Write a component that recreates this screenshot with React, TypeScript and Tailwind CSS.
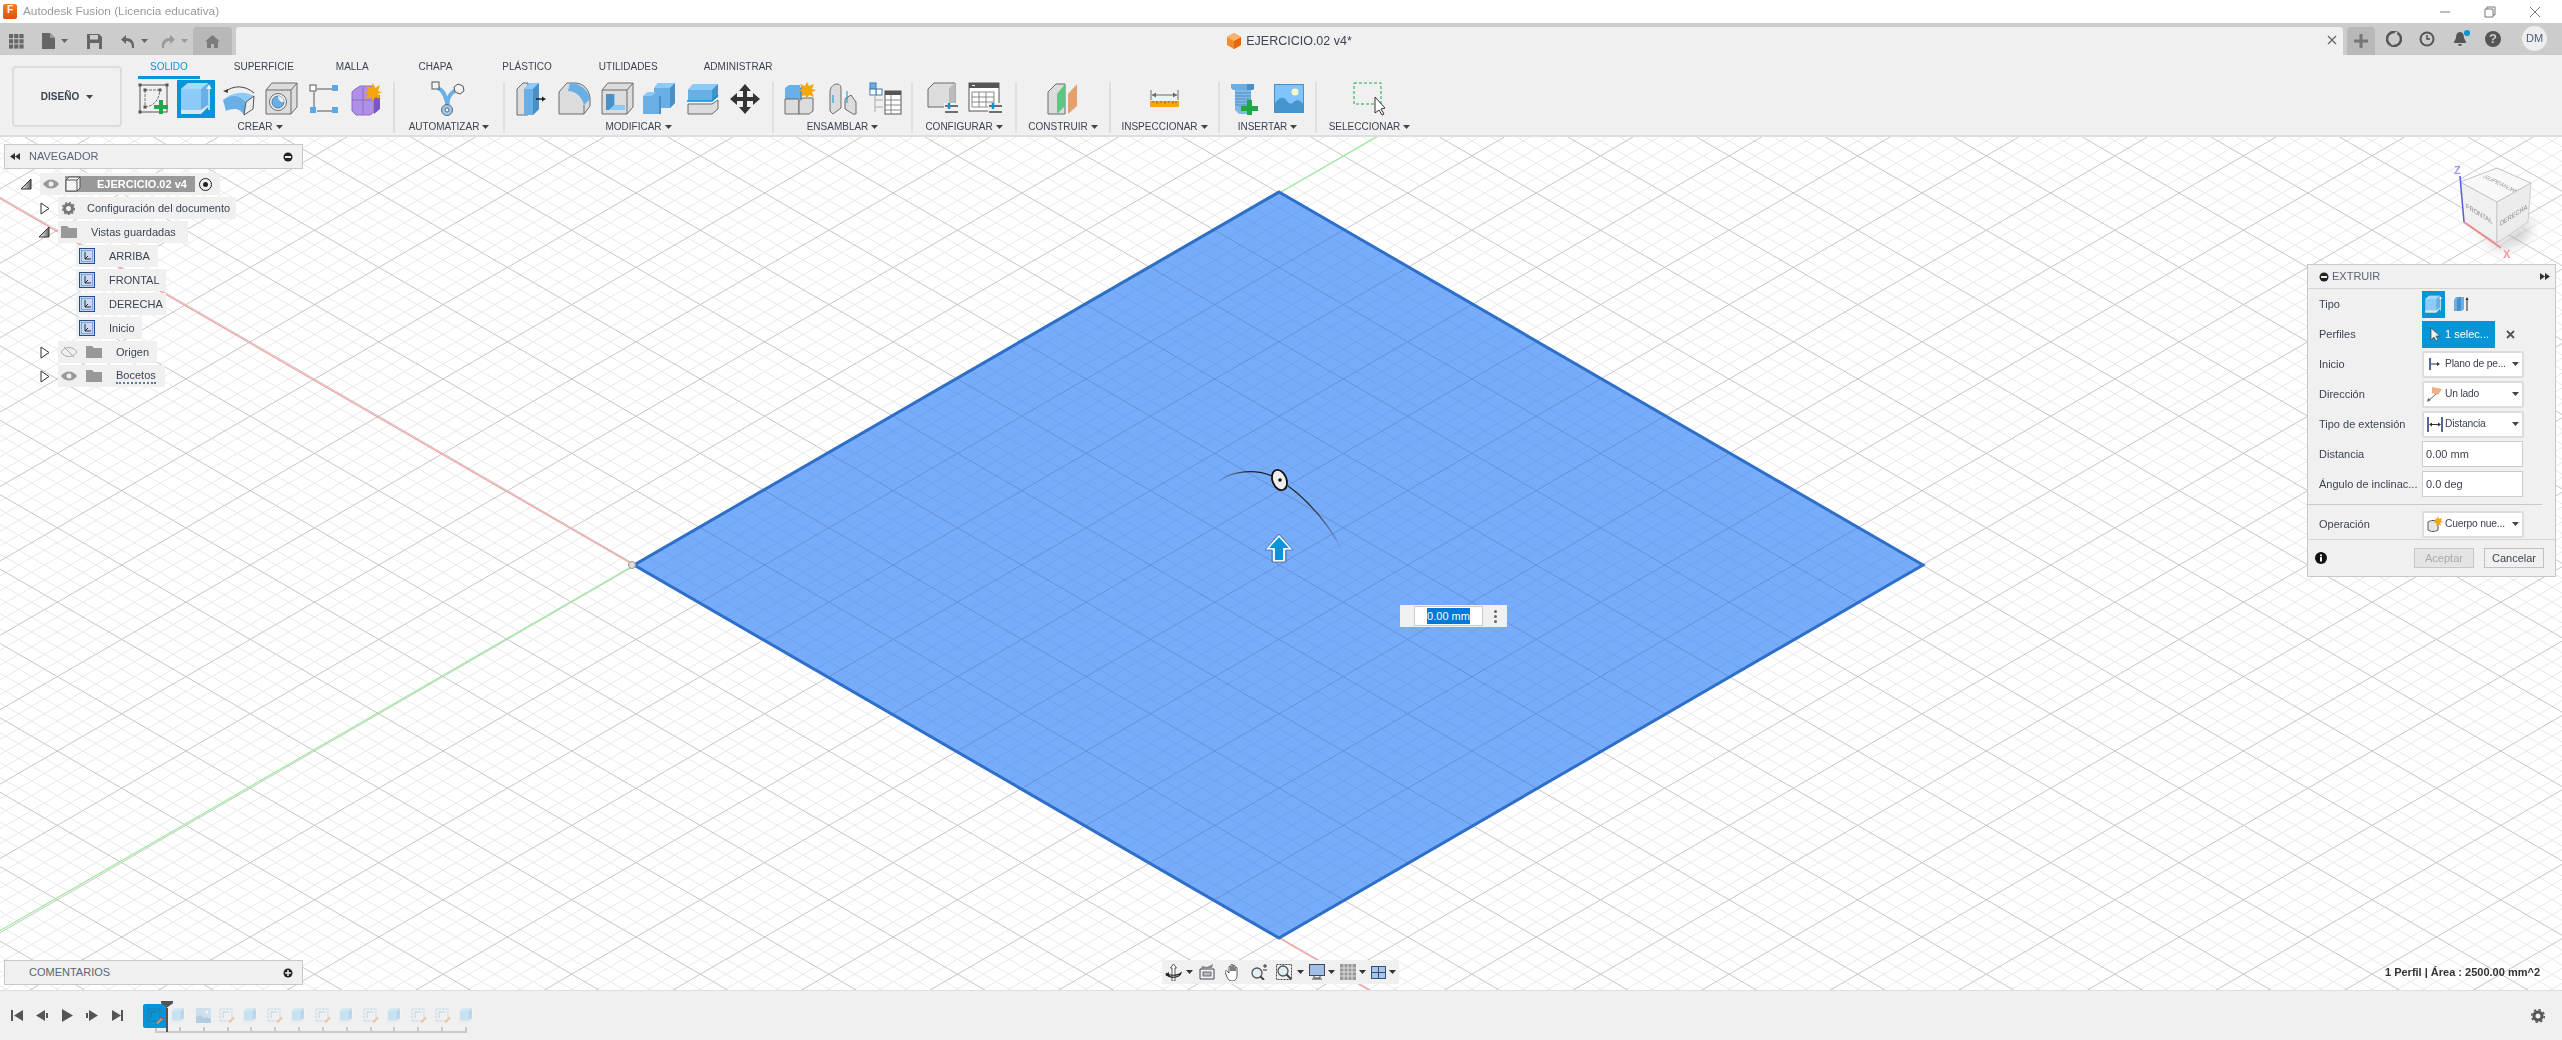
import type { ReactNode } from "react";

const BLUE = "#0696d7";
const LIGHT = "#8ccbf7";
const MID = "#6aaee6";
const DARK = "#4a90c8";
const LINE = "#6b6b6b";
const PALE = "#dcdcdc";

function Svg({ w, h, children, className }: { w: number; h: number; children: ReactNode; className?: string }) {
  return (
    <svg width={w} height={h} viewBox={`0 0 ${w} ${h}`} className={`block shrink-0 ${className ?? ""}`}>
      {children}
    </svg>
  );
}

function Caret({ color = "#444" }: { color?: string }) {
  return (
    <Svg w={7} h={4}>
      <path d="M0 0h7L3.5 4z" fill={color} />
    </Svg>
  );
}

/* ---------- ribbon icons ---------- */

function SketchIcon() {
  return (
    <Svg w={34} h={34}>
      <rect x="3" y="3" width="27" height="27" fill="none" stroke="#555" strokeWidth="1" />
      <path d="M8 8h14M8 8v17M8 25c9-1 14-7 15-17" fill="none" stroke="#777" strokeDasharray="3 1" />
      {[[3, 3], [30, 3], [3, 30], [8, 8], [23, 8], [8, 25]].map(([x, y]) => (
        <rect key={`${x}-${y}`} x={x - 1.5} y={y - 1.5} width="3" height="3" fill="#555" />
      ))}
      <path d="M22 18h4v5h5v4h-5v5h-4v-5h-5v-4h5z" fill="#1fa84a" />
    </Svg>
  );
}

function ExtrudeIcon({ scale = 1 }: { scale?: number }) {
  return (
    <svg width={38 * scale} height={38 * scale} viewBox="0 0 38 38" className="block shrink-0">
      <path d="M4 9l7-6h20v22l-7 7H4z" fill={LIGHT} />
      <path d="M4 9l7-6h20l-7 6z" fill="#a9d8fb" />
      <path d="M24 9l7-6v22l-7 5z" fill={MID} />
      <path d="M4 30h20l7-5v2l-7 7H4z" fill="#dfe6ea" />
      <path d="M32 30V7" stroke="#fff" strokeWidth="1.3" />
      <path d="M29.5 9L32 4l2.5 5z" fill="#fff" />
    </svg>
  );
}

function RevolveIcon() {
  return (
    <Svg w={34} h={34}>
      <path d="M3 10C11 3 23 3 32 11" fill="none" stroke="#444" />
      <path d="M1 9l5-2v4z" fill="#444" />
      <path d="M1 18c9-7 18-5 23 2l-2 13C18 26 11 26 4 29z" fill={MID} />
      <path d="M1 18c9-7 18-5 23 2l8-6C24 9 11 9 1 18z" fill={LIGHT} />
      <path d="M24 20l8-6-1 13-9 6z" fill="#eee" stroke="#555" />
    </Svg>
  );
}

function HoleIcon() {
  return (
    <Svg w={33} h={33}>
      <path d="M1 8l6-7h25v24l-6 7H1z" fill={PALE} stroke={LINE} />
      <path d="M1 8h25v24M26 8l6-7" fill="none" stroke={LINE} />
      <circle cx="13" cy="20" r="8.5" fill="#f2f2f2" stroke={LINE} />
      <circle cx="13" cy="20" r="6" fill={MID} stroke="#4a7aa8" />
      <path d="M13 14a6 6 0 016 6c-3 1-6-2-6-6z" fill="#eee" />
    </Svg>
  );
}

function BoxIcon() {
  return (
    <Svg w={30} h={30}>
      <path d="M8 5h16M5 8v18M8 27h16" stroke="#555" />
      <rect x="1" y="1" width="6" height="6" fill="#fff" stroke="#555" />
      <rect x="23" y="1" width="6" height="6" fill="#5aa9e6" />
      <rect x="1" y="23" width="6" height="6" fill="#5aa9e6" />
      <rect x="23" y="23" width="6" height="6" fill="#5aa9e6" />
    </Svg>
  );
}

function FormIcon() {
  return (
    <Svg w={32} h={34}>
      <path d="M4 8l6-4h14v26l-4 3H6l-4-4V10z" fill="#b08fe6" stroke="#8a6ccb" />
      <path d="M2 18h22M13 5v28" stroke="#8a6ccb" />
      <path d="M24 16l6-3v14l-6 5z" fill="#7a58c0" />
      <path d="M23 1l2 5 5-3-2 6 4 1-4 2 3 5-6-2-2 5-2-5-6 2 3-5-4-2 5-1-3-6 5 3z" fill="#f5a60a" />
    </Svg>
  );
}

function AutomateIcon() {
  return (
    <Svg w={36} h={36}>
      <path d="M7 7c6 3 7 8 9 14 2-6 4-10 11-13" fill="none" stroke={MID} strokeWidth="4" />
      <path d="M14 18h5l-1 9h-3z" fill={MID} />
      <rect x="1" y="1" width="7" height="7" fill="#f3f3f3" stroke="#555" />
      <path d="M27 3l5 2 1 5-4 3-5-2-1-5z" fill="#f3f3f3" stroke="#555" />
      <circle cx="16" cy="29" r="5.5" fill="#a9c5dc" stroke="#4b6f8e" />
      <circle cx="16" cy="29" r="2" fill="#f3f3f3" stroke="#4b6f8e" />
    </Svg>
  );
}

function PressPullIcon() {
  return (
    <Svg w={32} h={34}>
      <path d="M1 7l6-6h5v32H1z" fill={PALE} stroke={LINE} />
      <path d="M8 7l6-6h9v26l-6 6H8z" fill={MID} />
      <path d="M8 7l6-6h9l-6 6z" fill={LIGHT} />
      <path d="M17 7l6-6v26l-6 6z" fill={DARK} />
      <path d="M20 17h7" stroke="#222" strokeWidth="1.5" />
      <path d="M26 14.5l4 2.5-4 2.5z" fill="#222" />
    </Svg>
  );
}

function FilletIcon() {
  return (
    <Svg w={33} h={33}>
      <path d="M1 10l8-9h8c8 0 14 6 15 15v8l-6 8H1z" fill={PALE} stroke={LINE} />
      <path d="M12 1c9 0 18 6 20 16l-6 6C24 15 18 9 10 9z" fill={MID} />
      <path d="M26 23v9" stroke={LINE} />
    </Svg>
  );
}

function ShellIcon() {
  return (
    <Svg w={33} h={33}>
      <path d="M1 8l6-7h25v24l-6 7H1z" fill={PALE} stroke={LINE} />
      <path d="M1 8h25v24M26 8l6-7" fill="none" stroke={LINE} />
      <path d="M5 12h8v12h9l-2 4H5z" fill={DARK} />
      <path d="M13 12h1v11h10l-2 5h-2l2-4h-9z" fill={LIGHT} />
      <path d="M8 28l5-5h11v5z" fill={LIGHT} />
    </Svg>
  );
}

function CombineIcon() {
  return (
    <Svg w={33} h={33}>
      <path d="M11 6l4-5h17v20l-5 5H18v6H0V14l5-4h6z" fill={MID} />
      <path d="M11 6l4-5h17l-5 5zM0 14l5-4h8l-4 4z" fill={LIGHT} />
      <path d="M27 6l5-5v20l-5 5zM18 14v18l-2 0V14z" fill={DARK} />
    </Svg>
  );
}

function SplitIcon() {
  return (
    <Svg w={33} h={32}>
      <path d="M2 7l5-6h25v13l-6 4H2z" fill={MID} />
      <path d="M2 7l5-6h25l-6 6z" fill={LIGHT} />
      <path d="M26 7l6-6v13l-6 4z" fill={DARK} />
      <path d="M1 18h25l6-6" fill="none" stroke={BLUE} strokeWidth="1.5" />
      <path d="M2 21h24l6-4v9l-6 5H2z" fill={PALE} stroke={LINE} />
    </Svg>
  );
}

function MoveIcon() {
  return (
    <Svg w={32} h={32}>
      <path d="M16 1l6 7h-4v6h6v-4l7 6-7 6v-4h-6v6h4l-6 7-6-7h4v-6H8v4l-7-6 7-6v4h6V8h-4z" fill="#333" />
    </Svg>
  );
}

function NewComponentIcon() {
  return (
    <Svg w={33} h={33}>
      <path d="M1 6l4-3h11v14H1z" fill={MID} />
      <path d="M16 6l2-2v13h-2z" fill={DARK} />
      <path d="M1 17h14v15H1z" fill={PALE} stroke={LINE} />
      <path d="M15 19l4-3h10v13l-4 3H15z" fill={PALE} stroke={LINE} />
      <path d="M23 0l2 4 5-2-2 5 4 1-4 2 2 5-5-2-2 4-2-4-4 2 1-5-4-2 4-1-2-5 5 2z" fill="#f5a60a" />
    </Svg>
  );
}

function JointIcon() {
  return (
    <Svg w={30} h={32}>
      <path d="M2 9c0-4 3-8 7-8s4 4 4 6v18l-8 6-3-3z" fill={PALE} stroke={LINE} />
      <path d="M17 16l6-4 5 7v12l-3 0-8-5z" fill={PALE} stroke={LINE} />
      <path d="M5 20v-8M19 8v12" stroke={BLUE} />
    </Svg>
  );
}

function TableIcon() {
  return (
    <Svg w={33} h={33}>
      <rect x="1" y="1" width="6" height="6" fill={MID} stroke="#3b7bb0" />
      <rect x="7" y="7" width="6" height="6" fill="#fff" stroke="#3b7bb0" />
      <rect x="1" y="7" width="6" height="6" fill="#fff" stroke="#3b7bb0" />
      <path d="M6 13v17M6 18h8M6 25h8" stroke="#aaa" />
      <rect x="16" y="9" width="16" height="23" fill="#fff" stroke="#555" />
      <rect x="16" y="9" width="16" height="4" fill="#555" />
      <path d="M16 18h16M16 23h16M16 28h16M22 13v19" stroke="#888" />
    </Svg>
  );
}

function ParamIcon() {
  return (
    <Svg w={32} h={33}>
      <path d="M1 7l6-6h21v24H1z" fill={PALE} stroke={LINE} />
      <path d="M22 6l6-5v24h-6z" fill="#bbb" />
      <rect x="17" y="21" width="15" height="12" fill="#f0f0f0" />
      <path d="M18 24h13M18 30h13" stroke="#444" strokeWidth="1.5" />
      <path d="M22 21v6" stroke={BLUE} strokeWidth="2.5" />
    </Svg>
  );
}

function ParamTableIcon() {
  return (
    <Svg w={34} h={33}>
      <rect x="1" y="1" width="30" height="28" fill="#fff" stroke="#555" />
      <rect x="1" y="1" width="30" height="5" fill="#555" />
      <path d="M4 3.5h3" stroke="#fff" />
      <path d="M4 10h22v15H4zM4 15h22M4 20h22M11 10v15M18 10v15" fill="none" stroke="#888" />
      <rect x="20" y="21" width="14" height="12" fill="#f0f0f0" />
      <path d="M21 24h13M21 30h13" stroke="#444" strokeWidth="1.5" />
      <path d="M25 21v6" stroke={BLUE} strokeWidth="2.5" />
    </Svg>
  );
}

function PlaneIcon() {
  return (
    <Svg w={32} h={32}>
      <path d="M1 9l8-8h9v30H1z" fill={PALE} stroke={LINE} />
      <path d="M10 11l8-10v22l-8 8z" fill="#5cc782" />
      <path d="M21 11l9-10v22l-9 8z" fill="#e6a06e" />
    </Svg>
  );
}

function MeasureIcon() {
  return (
    <Svg w={30} h={18}>
      <path d="M1 0v10M28 0v10M2 5h25" fill="none" stroke={LINE} />
      <path d="M2 5l4-2.5v5zM27 5l-4-2.5v5z" fill={LINE} />
      <rect x="0" y="11" width="29" height="6" fill="#f5a60a" />
      <path d="M3 11v2M7 11v3M11 11v2M15 11v3M19 11v2M23 11v3M26 11v2" stroke="#9c6a00" />
    </Svg>
  );
}

function BoltIcon() {
  return (
    <Svg w={32} h={32}>
      <path d="M1 1h23l0 5-2 1H3L1 5z" fill={MID} />
      <path d="M17 1h7v5l-2 1h-5z" fill={DARK} />
      <path d="M5 7h16v17l-4 7H9l-4-4z" fill="#83b8e4" />
      <path d="M5 10h16M5 13h16M5 16h16M5 19h16M5 22h16" stroke={DARK} />
      <path d="M17 17h5v6h6v5h-6v4h-5v-4h-6v-5h6z" fill="#1fa84a" />
    </Svg>
  );
}

function CanvasIcon() {
  return (
    <Svg w={30} h={30}>
      <rect x="0.5" y="0.5" width="29" height="28" fill="#7fc4fa" stroke="#4a90c8" />
      <circle cx="21" cy="8" r="3.5" fill="#fdf7c8" />
      <path d="M1 28V19c5-6 8-7 12-2 3 4 5 3 8 0 3-2 6 0 8 3v8z" fill="#4596cf" />
    </Svg>
  );
}

function SelectIcon() {
  return (
    <Svg w={34} h={34}>
      <rect x="1" y="1" width="27" height="21" fill="none" stroke="#1fa84a" strokeDasharray="3 2" />
      <path d="M22 15v16l4-3 3 5 2-1-3-5 4-1z" fill="#fff" stroke="#333" />
    </Svg>
  );
}

/* ---------- top bar icons ---------- */

function AppGrid() {
  return (
    <Svg w={15} h={15}>
      {[0, 5.2, 10.4].flatMap((x) =>
        [0, 5.2, 10.4].map((y) => <rect key={`${x}-${y}`} x={x} y={y} width="4.2" height="4.2" fill="#666" />),
      )}
    </Svg>
  );
}

function TopIcons() {
  return (
    <div className="flex w-[193px] items-center pl-[9px]">
      <AppGrid />
      <div className="ml-[18px]">
        <Svg w={13} h={16}>
          <path d="M0 0h8l5 5v11H0z" fill="#666" />
          <path d="M8 0v5h5z" fill="#999" />
        </Svg>
      </div>
      <div className="ml-[6px]"><Caret color="#666" /></div>
      <div className="ml-[19px]">
        <Svg w={15} h={15}>
          <path d="M0 0h12l3 3v12H0z" fill="#666" />
          <rect x="3" y="1" width="8" height="4.5" fill="#ccc" />
          <rect x="3" y="9" width="9" height="6" fill="#ccc" />
        </Svg>
      </div>
      <div className="ml-[19px]">
        <Svg w={14} h={13}>
          <path d="M5 0L0 4.500 5 9V6c4 0 6 2 6 7h2c1-7-3-10-8-10z" fill="#666" />
        </Svg>
      </div>
      <div className="ml-[6px]"><Caret color="#666" /></div>
      <div className="ml-[13px]">
        <Svg w={14} h={13}>
          <path d="M9 0l5 4.500L9 9V6C5 6 3 8 3 13H1C0 6 4 3 9 3z" fill="#999" />
        </Svg>
      </div>
      <div className="ml-[6px]"><Caret color="#999" /></div>
    </div>
  );
}

function WindowControls() {
  return (
    <div className="flex items-center gap-[33px] pr-[21px]">
      <Svg w={12} h={12}><path d="M1 6h10" stroke="#777" /></Svg>
      <Svg w={12} h={12}>
        <path d="M3 3V1h8v8H9M1 3h8v8H1z" fill="none" stroke="#777" />
      </Svg>
      <Svg w={12} h={12}><path d="M1 1l10 10M11 1L1 11" stroke="#777" /></Svg>
    </div>
  );
}

function TitleBar() {
  return (
    <div className="flex h-[23px] items-center justify-between bg-white">
      <div className="flex items-center">
        <div className="ml-[3px] flex h-[15px] w-[14px] flex-col items-center rounded-[2px] bg-gradient-to-b from-[#f58220] to-[#d94f12] text-[10px] leading-[11px] font-bold text-white">
          F
        </div>
        <span className="ml-[6px] text-[11.800px] text-[#999]">Autodesk Fusion (Licencia educativa)</span>
      </div>
      <WindowControls />
    </div>
  );
}

function TabStrip() {
  return (
    <div className="flex h-[32px] items-end bg-[#cccccc]">
      <div className="flex h-[28px] items-center self-end">
        <TopIcons />
      </div>
      <div className="flex h-[28px] w-[39px] items-center justify-center rounded-t-[4px] bg-[#b8b8b8]">
        <Svg w={15} h={13}>
          <path d="M7.500 0L15 6.500h-2V13H9V9H6v4H2V6.500H0z" fill="#7c7c7c" />
        </Svg>
      </div>
      <div className="relative ml-[4px] flex h-[28px] w-[2107px] items-center justify-center rounded-t-[4px] bg-[#f0f0f0]">
        <div className="flex items-center gap-[5px]">
          <Svg w={14} h={16}>
            <path d="M7 0l7 4v8l-7 4-7-4V4z" fill="#f58a2c" />
            <path d="M7 8l7-4v8l-7 4z" fill="#e8650f" />
            <path d="M7 0l7 4-7 4-7-4z" fill="#fbb26a" />
          </Svg>
          <span className="text-[12.500px] text-[#3c4453]">EJERCICIO.02 v4*</span>
        </div>
        <div className="absolute top-[8px] right-[6px]">
          <Svg w={10} h={10}><path d="M1 1l8 8M9 1L1 9" stroke="#666" strokeWidth="1.3" /></Svg>
        </div>
      </div>
      <div className="ml-[4px] flex h-[28px] w-[28px] items-center justify-center rounded-t-[4px] bg-[#b8b8b8]">
        <Svg w={14} h={14}><path d="M5.500 0h3v5.500H14v3H8.500V14h-3V8.500H0v-3h5.500z" fill="#777" /></Svg>
      </div>
      <div className="ml-[11px] flex h-[32px] items-center gap-[17px]">
        <Svg w={16} h={16}>
          <circle cx="8" cy="8" r="7" fill="none" stroke="#555" strokeWidth="2.500" />
          <path d="M11 1L5 8h4l-3 6" stroke="#ccc" strokeWidth="2" fill="none" />
        </Svg>
        <Svg w={16} h={16}>
          <circle cx="8" cy="8" r="7.500" fill="#555" />
          <circle cx="8" cy="8" r="5.500" fill="#ccc" />
          <path d="M8 4v4h3" fill="none" stroke="#444" strokeWidth="1.300" />
        </Svg>
        <div className="relative">
          <Svg w={16} h={16}>
            <path d="M8 1c3 0 4 3 4 6l2 4v1H2v-1l2-4c0-3 1-6 4-6zM6 13h4a2 2 0 01-4 0z" fill="#555" />
          </Svg>
          <div className="absolute top-[-1px] right-[-2px] h-[6px] w-[6px] rounded-full bg-[#0696d7]" />
        </div>
        <div className="flex h-[16px] w-[16px] items-center justify-center rounded-full bg-[#555] text-[13px] font-bold text-[#ccc]">?</div>
      </div>
      <div className="mb-[1px] ml-[21px] flex h-[25px] w-[25px] items-center justify-center self-center rounded-full bg-[#eeeeee] text-[11px] text-[#4a5a78]">
        DM
      </div>
    </div>
  );
}

/* ---------- ribbon ---------- */

const TABS = [
  { label: "SOLIDO", gap: "ml-0" },
  { label: "SUPERFICIE", gap: "ml-[22px]" },
  { label: "MALLA", gap: "ml-[18px]" },
  { label: "CHAPA", gap: "ml-[26px]" },
  { label: "PLÁSTICO", gap: "ml-[26px]" },
  { label: "UTILIDADES", gap: "ml-[23px]" },
  { label: "ADMINISTRAR", gap: "ml-[22px]" },
];

interface Group {
  label: string;
  width: number;
  pad?: number;
  icons: ReactNode[];
}

const GROUPS: Group[] = [
  {
    label: "CREAR",
    width: 262,
    pad: 6,
    icons: [
      <SketchIcon key="a" />,
      <div key="b" className="bg-[#0696d7]"><ExtrudeIcon /></div>,
      <RevolveIcon key="c" />,
      <HoleIcon key="d" />,
      <BoxIcon key="e" />,
      <FormIcon key="f" />,
    ],
  },
  { label: "AUTOMATIZAR", width: 110, icons: [<AutomateIcon key="a" />] },
  {
    label: "MODIFICAR",
    width: 269,
    icons: [
      <PressPullIcon key="a" />,
      <FilletIcon key="b" />,
      <ShellIcon key="c" />,
      <CombineIcon key="d" />,
      <SplitIcon key="e" />,
      <MoveIcon key="f" />,
    ],
  },
  { label: "ENSAMBLAR", width: 139, icons: [<NewComponentIcon key="a" />, <JointIcon key="b" />, <TableIcon key="c" />] },
  { label: "CONFIGURAR", width: 104, icons: [<ParamIcon key="a" />, <ParamTableIcon key="b" />] },
  { label: "CONSTRUIR", width: 94, icons: [<PlaneIcon key="a" />] },
  { label: "INSPECCIONAR", width: 109, icons: [<MeasureIcon key="a" />] },
  { label: "INSERTAR", width: 97, icons: [<BoltIcon key="a" />, <CanvasIcon key="b" />] },
  { label: "SELECCIONAR", width: 107, icons: [<SelectIcon key="a" />] },
];

function Ribbon() {
  return (
    <div className="flex h-[82px] border-b-2 border-[#dedede] bg-[#f0f0f0]">
      <div className="w-[132px] pt-[11px] pl-[12px]">
        <div className="flex h-[61px] w-[110px] items-center justify-center gap-[7px] rounded-[4px] border-2 border-[#dcdcdc] text-[10px] font-bold text-[#3c4453]">
          DISEÑO
          <Caret />
        </div>
      </div>
      <div className="flex flex-col">
        <div className="flex h-[24px] pl-[6px]">
          {TABS.map((tab, i) => (
            <div
              key={tab.label}
              className={`flex h-[24px] items-center border-b-[3px] px-[12px] pt-[2px] text-[10px] ${tab.gap} ${
                i === 0 ? "border-[#0696d7] text-[#0696d7]" : "border-transparent text-[#3c4453]"
              }`}
            >
              {tab.label}
            </div>
          ))}
        </div>
        <div className="flex">
          {GROUPS.map((group, i) => (
            <div
              key={group.label}
              style={{ width: group.width, paddingRight: group.pad ?? 0 }}
              className="relative flex h-[56px] flex-col items-center"
            >
              <div className="flex h-[39px] items-center justify-center">
                {group.icons.map((icon, k) => (
                  <div key={k} className="flex w-[42.500px] justify-center">{icon}</div>
                ))}
              </div>
              <div className="mt-[1px] flex h-[15px] items-center gap-[3px] text-[10px] text-[#3c4453]">
                {group.label}
                <Caret />
              </div>
              {i < GROUPS.length - 1 && <div className="absolute top-[3px] right-[-1px] h-[51px] w-[2px] bg-[#e0e0e0]" />}
            </div>
          ))}
        </div>
      </div>
    </div>
  );
}

/* ---------- viewport drawing ---------- */

const TOP = { x: 1279, y: 193 };
const CELL_W = 128.6;
const CELL_H = 74.4;
const SLOPE = CELL_H / CELL_W;
const MINOR = CELL_W / 5;

function gridLines(major: boolean) {
  const out: ReactNode[] = [];
  const y0 = 137;
  const y1 = 990;
  for (let k = -110; k <= 110; k++) {
    if ((k % 5 === 0) !== major) continue;
    const c = TOP.x + k * MINOR;
    const d0 = (y0 - TOP.y) / SLOPE;
    const d1 = (y1 - TOP.y) / SLOPE;
    out.push(<line key={`a${k}`} x1={c + d0} y1={y0} x2={c + d1} y2={y1} />);
    out.push(<line key={`b${k}`} x1={c - d0} y1={y0} x2={c - d1} y2={y1} />);
  }
  return out;
}

function CubeGizmo() {
  return (
    <g>
      <defs>
        <filter id="cube-shadow" x="-50%" y="-50%" width="200%" height="200%">
          <feGaussianBlur stdDeviation="6" />
        </filter>
      </defs>
      <path d="M2464 222l33 21 31-21 8-12-10 30-28 10z" fill="#999" opacity="0.5" filter="url(#cube-shadow)" />
      <path d="M2460 182l37-14 34 15-3 39-31 21-33-21z" fill="#f4f4f4" opacity="0.9" />
      <path d="M2460 182l37-14 34 15-34 19z" fill="#f8f8f8" stroke="#aaa" strokeWidth="0.7" />
      <path d="M2460 182l4 40 33 21v-41z" fill="#f0f0f0" stroke="#bbb" strokeWidth="0.7" />
      <path d="M2497 202l34-19-3 39-31 21z" fill="#ececec" stroke="#bbb" strokeWidth="0.7" />
      <text transform="matrix(0.87 0.42 -0.9 0.42 2482 177)" fontSize="7" fill="#999" fontFamily="Liberation Sans, sans-serif">SUPERIOR</text>
      <text transform="matrix(0.82 0.5 0 1 2466 208)" fontSize="7" fill="#888" fontFamily="Liberation Sans, sans-serif">FRONTAL</text>
      <text transform="matrix(0.8 -0.5 0 1 2500 226)" fontSize="7" fill="#888" fontFamily="Liberation Sans, sans-serif">DERECHA</text>
      <line x1="2464" y1="222" x2="2460" y2="176" stroke="#5a5af0" strokeWidth="1.500" />
      <line x1="2464" y1="222" x2="2501" y2="248" stroke="#ee8a8a" strokeWidth="2" />
      <text x="2454" y="174" fontSize="11" fontWeight="bold" fill="#9a9af5" fontFamily="Liberation Sans, sans-serif">Z</text>
      <text x="2503" y="258" fontSize="11" fontWeight="bold" fill="#f59a9a" fontFamily="Liberation Sans, sans-serif">X</text>
    </g>
  );
}

function Canvas() {
  return (
    <svg className="absolute inset-0" width="2562" height="853" viewBox="0 137 2562 853">
      <defs>
        <linearGradient id="arc-in" gradientUnits="userSpaceOnUse" x1="1216" y1="0" x2="1272" y2="0">
          <stop offset="0" stopColor="#222" stopOpacity="0" />
          <stop offset="0.6" stopColor="#222" />
        </linearGradient>
        <linearGradient id="arc-out" gradientUnits="userSpaceOnUse" x1="1288" y1="0" x2="1342" y2="0">
          <stop offset="0.4" stopColor="#222" />
          <stop offset="1" stopColor="#222" stopOpacity="0" />
        </linearGradient>
      </defs>
      <rect x="0" y="137" width="2562" height="853" fill="#ffffff" />
      <g stroke="#e9e9e9" strokeWidth="1">{gridLines(false)}</g>
      <g stroke="#c6c6c6" strokeWidth="1">{gridLines(true)}</g>
      <line x1="-1" y1="198" x2="1400" y2="1008" stroke="#f6a3a3" strokeWidth="1.300" />
      <line x1="-2" y1="932" x2="1380" y2="135" stroke="#a0eea0" strokeWidth="1.300" />
      <polygon points="1279,192 1923,565 1279,938 634,565" fill="#78adfb" className="mix-blend-multiply" />
      <polygon points="1279,192 1923,565 1279,938 634,565" fill="#78adfb" opacity="0.3" />
      <polygon points="1279,192 1923,565 1279,938 634,565" fill="none" stroke="#2e6fc9" strokeWidth="3" />
      <circle cx="632" cy="565" r="3.500" fill="#ddd" stroke="#999" />
      <path d="M1218 482c14-12 38-13 54-6" fill="none" stroke="url(#arc-in)" strokeWidth="1.300" />
      <path d="M1288 486c20 14 46 44 54 66" fill="none" stroke="url(#arc-out)" strokeWidth="1.200" />
      <ellipse cx="1279.500" cy="480" rx="7" ry="10.500" transform="rotate(-22 1279.500 480)" fill="#eeeeee" stroke="#111" strokeWidth="1.800" />
      <circle cx="1280" cy="480" r="1.800" fill="#111" />
      <path d="M1279 536l12 13h-7v12h-10v-12h-7z" fill="#0696d7" stroke="#fff" strokeWidth="1.800" />
      <path d="M1279 534l14 16h-7v12h-14v-12h-7z" fill="none" stroke="#3a6aa8" strokeWidth="0.800" />
      <CubeGizmo />
    </svg>
  );
}

/* ---------- browser tree ---------- */

function Eye({ off }: { off?: boolean }) {
  return (
    <Svg w={16} h={10}>
      <path d="M0 5c4-6 12-6 16 0-4 6-12 6-16 0z" fill={off ? "none" : "#999"} stroke={off ? "#aaa" : "none"} />
      {!off && <circle cx="8" cy="5" r="2.500" fill="#eee" />}
      {off && <path d="M3 0l10 10" stroke="#aaa" />}
    </Svg>
  );
}

function Folder() {
  return (
    <Svg w={16} h={12}>
      <path d="M0 0h6l2 2h8v10H0z" fill="#999" />
    </Svg>
  );
}

function ViewIcon() {
  return (
    <Svg w={16} h={16}>
      <rect x="0.500" y="0.500" width="15" height="15" fill="#dbe8f5" stroke="#1f4e8c" strokeWidth="1.200" />
      <rect x="2.500" y="2.500" width="11" height="11" fill="#c8dcf0" stroke="#5d8abf" strokeWidth="0.700" />
      <path d="M6 4v7h6M6 11l3-3" fill="none" stroke="#223" />
    </Svg>
  );
}

function Open() {
  return (
    <Svg w={12} h={12}>
      <path d="M11 1v10H1z" fill="url(#open)" stroke="#333" />
      <defs>
        <linearGradient id="open" x1="0" x2="1">
          <stop offset="0" stopColor="#fff" />
          <stop offset="1" stopColor="#666" />
        </linearGradient>
      </defs>
    </Svg>
  );
}

function Closed() {
  return (
    <Svg w={10} h={13}>
      <path d="M1 1l8 5.500L1 12z" fill="#fff" stroke="#333" />
    </Svg>
  );
}

function Pill({ left, width, children }: { left: number; width: number; children: ReactNode }) {
  return (
    <div style={{ marginLeft: left, width }} className="flex h-[22px] items-center bg-[#f0f0f0] text-[11px] text-[#3c4453]">
      {children}
    </div>
  );
}

const VIEWS = [
  { name: "ARRIBA", width: 82 },
  { name: "FRONTAL", width: 90 },
  { name: "DERECHA", width: 90 },
  { name: "Inicio", width: 66 },
];

function Navigator() {
  return (
    <div className="absolute top-[7px] left-[4px] w-[299px]">
      <div className="flex h-[25px] items-center border border-[#c8c8c8] bg-[#f0f0f0] pr-[9px] pl-[5px] text-[11px] text-[#5a6478]">
        <Svg w={10} h={7}><path d="M5 0v7L0 3.500zM10 0v7L5 3.500z" fill="#333" /></Svg>
        <span className="ml-[9px] flex-1">NAVEGADOR</span>
        <Svg w={10} h={10}>
          <circle cx="5" cy="5" r="4.500" fill="#222" />
          <rect x="2" y="4" width="6" height="2" fill="#eee" />
        </Svg>
      </div>
      <div className="mt-[3px] flex h-[24px] items-center pl-[16px]">
        <Open />
        <div className="ml-[8px] flex h-[22px] w-[180px] items-center bg-[#f0f0f0]">
          <div className="ml-[3px]"><Eye /></div>
          <div className="ml-[6px] flex h-[16px] w-[130px] items-center bg-[#999]">
            <Svg w={16} h={16}>
              <path d="M1 4l3-3h11v11l-3 3H1z" fill="#f4f4f4" stroke="#555" />
              <path d="M1 4h11v11M12 4l3-3" fill="none" stroke="#555" />
            </Svg>
            <span className="ml-[16px] text-[11px] font-bold text-white">EJERCICIO.02 v4</span>
          </div>
          <div className="ml-[4px] flex h-[13px] w-[13px] items-center justify-center rounded-full border border-[#222]">
            <div className="h-[5px] w-[5px] rounded-full bg-[#222]" />
          </div>
        </div>
      </div>
      <div className="flex h-[24px] items-center pl-[36px]">
        <Closed />
        <Pill left={8} width={178}>
          <Svg w={13} h={13} className="ml-[4px]">
            <circle cx="6.500" cy="6.500" r="4" fill="none" stroke="#777" strokeWidth="3" />
            <circle cx="6.500" cy="6.500" r="6" fill="none" stroke="#777" strokeWidth="1.500" strokeDasharray="2 2" />
          </Svg>
          <span className="ml-[12px]">Configuración del documento</span>
        </Pill>
      </div>
      <div className="flex h-[24px] items-center pl-[34px]">
        <Open />
        <Pill left={8} width={130}>
          <div className="ml-[3px]"><Folder /></div>
          <span className="ml-[14px]">Vistas guardadas</span>
        </Pill>
      </div>
      {VIEWS.map((view) => (
        <div key={view.name} className="flex h-[24px] items-center pl-[72px]">
          <Pill left={0} width={view.width}>
            <div className="ml-[3px]"><ViewIcon /></div>
            <span className="ml-[14px]">{view.name}</span>
          </Pill>
        </div>
      ))}
      <div className="flex h-[24px] items-center pl-[36px]">
        <Closed />
        <Pill left={8} width={99}>
          <div className="ml-[3px]"><Eye off /></div>
          <div className="ml-[9px]"><Folder /></div>
          <span className="ml-[14px]">Origen</span>
        </Pill>
      </div>
      <div className="flex h-[24px] items-center pl-[36px]">
        <Closed />
        <Pill left={8} width={107}>
          <div className="ml-[3px]"><Eye /></div>
          <div className="ml-[9px]"><Folder /></div>
          <span className="ml-[14px] border-b-2 border-dotted border-[#5a78a8] leading-[13px]">Bocetos</span>
        </Pill>
      </div>
    </div>
  );
}

function Comments() {
  return (
    <div className="absolute bottom-[5px] left-[4px] flex h-[25px] w-[299px] items-center border border-[#c8c8c8] bg-[#f0f0f0] pr-[9px] pl-[24px] text-[11px] text-[#5a6478]">
      <span className="flex-1">COMENTARIOS</span>
      <Svg w={10} h={10}>
        <circle cx="5" cy="5" r="4.500" fill="#222" />
        <path d="M2 5h6M5 2v6" stroke="#eee" strokeWidth="1.500" />
      </Svg>
    </div>
  );
}

/* ---------- extrude dialog ---------- */

function Row({ label, children, className }: { label: string; children: ReactNode; className?: string }) {
  return (
    <div className={`flex h-[30px] items-center ${className ?? ""}`}>
      <span className="w-[114px] pl-[11px] text-[11px] whitespace-nowrap text-[#3c4453]">{label}</span>
      {children}
    </div>
  );
}

function Dropdown({ icon, text }: { icon: ReactNode; text: string }) {
  return (
    <div className="flex h-[27px] w-[102px] items-center rounded-[2px] border-2 border-[#dcdcdc] bg-white pr-[3px] pl-[2px] text-[10.300px] tracking-[-0.2px] text-[#3c4453]">
      <div className="flex w-[17px] justify-center">{icon}</div>
      <span className="ml-[2px] whitespace-nowrap">{text}</span>
      <div className="ml-auto"><Caret /></div>
    </div>
  );
}

function ExtrudeDialog() {
  return (
    <div className="absolute top-[127px] right-[6px] w-[249px] border border-[#c8c8c8] bg-[#f0f0f0]">
      <div className="flex h-[24px] items-center border-b border-[#d4d4d4] pr-[5px] pl-[11px] text-[11px] text-[#5a6478]">
        <Svg w={10} h={10}>
          <circle cx="5" cy="5" r="4.500" fill="#222" />
          <rect x="2" y="4" width="6" height="2" fill="#eee" />
        </Svg>
        <span className="ml-[3px] flex-1">EXTRUIR</span>
        <Svg w={10} h={7}><path d="M0 0v7l5-3.500zM5 0v7l5-3.500z" fill="#333" /></Svg>
      </div>
      <Row label="Tipo">
        <div className="flex items-center gap-[8px]">
          <div className="flex h-[27px] w-[23px] items-center justify-center bg-[#0696d7]">
            <ExtrudeIcon scale={0.55} />
          </div>
          <Svg w={16} h={16}>
            <path d="M1 4l2-3h8v12l-2 2H1z" fill={MID} />
            <path d="M4 4l2-3h2v12l-2 2H4z" fill={DARK} />
            <path d="M14 15V3" stroke="#222" />
            <path d="M12.500 4L14 1l1.500 3z" fill="#222" />
          </Svg>
        </div>
      </Row>
      <Row label="Perfiles">
        <div className="flex h-[27px] w-[73px] items-center bg-[#0696d7] pl-[8px] text-[11px] text-white">
          <Svg w={10} h={15}>
            <path d="M1 1v12l3-3 2 4 2-1-2-4h4z" fill="#eee" stroke="#444" strokeWidth="0.700" />
          </Svg>
          <span className="ml-[5px]">1 selec...</span>
        </div>
        <div className="ml-[11px]">
          <Svg w={9} h={9}><path d="M1 1l7 7M8 1L1 8" stroke="#555" strokeWidth="1.800" /></Svg>
        </div>
      </Row>
      <Row label="Inicio">
        <Dropdown
          text="Plano de pe..."
          icon={
            <Svg w={12} h={12}>
              <path d="M1 0v12" stroke="#1f3a6e" strokeWidth="1.500" />
              <path d="M2 6h7" stroke="#333" />
              <path d="M8 4l3 2-3 2z" fill="#333" />
            </Svg>
          }
        />
      </Row>
      <Row label="Dirección">
        <Dropdown
          text="Un lado"
          icon={
            <Svg w={15} h={15}>
              <path d="M5 0l10 2-4 6-6-2z" fill="#eeb087" />
              <path d="M1 14l8-7" stroke="#666" />
              <path d="M0 15l1-4 3 2z" fill="#666" />
            </Svg>
          }
        />
      </Row>
      <Row label="Tipo de extensión">
        <Dropdown
          text="Distancia"
          icon={
            <Svg w={16} h={15}>
              <path d="M1 0v15M15 0v15" stroke="#1f3a6e" strokeWidth="1.500" />
              <path d="M3 7.500h10" stroke="#333" />
              <path d="M5 5.500l-3 2 3 2zM11 5.500l3 2-3 2z" fill="#333" />
            </Svg>
          }
        />
      </Row>
      <Row label="Distancia">
        <div className="flex h-[26px] w-[101px] items-center border border-[#ccc] bg-white pl-[3px] text-[11px] text-[#3c4453]">0.00 mm</div>
      </Row>
      <Row label="Ángulo de inclinac...">
        <div className="flex h-[26px] w-[101px] items-center border border-[#ccc] bg-white pl-[3px] text-[11px] text-[#3c4453]">0.0 deg</div>
      </Row>
      <div className="mt-[5px] mr-[13px] h-px bg-[#c8c8c8]" />
      <Row label="Operación" className="mt-[4px]">
        <Dropdown
          text="Cuerpo nue..."
          icon={
            <Svg w={16} h={16}>
              <path d="M1 6c3-2 7-2 10 0v8c-3 2-7 2-10 0z" fill="#e4e4e4" stroke="#555" />
              <path d="M11 0l1 3 3-1-1 3 2 1-3 1 1 3-3-2-1 2-1-3-3-1 3-1-1-3 2 1z" fill="#f5a60a" />
            </Svg>
          }
        />
      </Row>
      <div className="flex h-[37px] items-center border-t border-[#d4d4d4] pr-[11px] pl-[7px]">
        <Svg w={12} h={12}>
          <circle cx="6" cy="6" r="6" fill="#111" />
          <rect x="5" y="5" width="2" height="4.500" fill="#fff" />
          <rect x="5" y="2.500" width="2" height="1.700" fill="#fff" />
        </Svg>
        <div className="ml-[87px] flex h-[20px] w-[60px] items-center justify-center border border-[#c8c8c8] bg-[#e4e4e4] text-[11px] text-[#aaa]">Aceptar</div>
        <div className="ml-[10px] flex h-[20px] w-[60px] items-center justify-center border border-[#c0c0c0] bg-[#f0f0f0] text-[11px] text-[#3c4453]">Cancelar</div>
      </div>
    </div>
  );
}

function DistanceInput() {
  return (
    <div className="absolute top-[468px] left-[1400px] flex h-[22px] w-[107px] items-center bg-[#f0f0f0] pl-[14px]">
      <div className="flex h-[20px] w-[69px] items-center justify-center border border-[#ccc] bg-white text-[11px]">
        <span className="bg-[#0078d7] text-white">0.00 mm</span>
      </div>
      <div className="ml-[11px] flex flex-col gap-[2px]">
        <div className="h-[3px] w-[3px] rounded-full bg-[#666]" />
        <div className="h-[3px] w-[3px] rounded-full bg-[#666]" />
        <div className="h-[3px] w-[3px] rounded-full bg-[#666]" />
      </div>
    </div>
  );
}

/* ---------- navigation bar + timeline ---------- */

function NavBar() {
  return (
    <div className="absolute bottom-[6px] left-[1162px] flex h-[24px] w-[237px] items-center bg-[#f0f0f0] pl-[3px]">
      <Svg w={17} h={17}>
        <path d="M8.500 0l3 4H10v13H7V4H5.500z" fill="#fff" stroke="#333" strokeWidth="0.800" />
        <path d="M1 9c2 3 12 3 15 0-1 5-13 6-13 1" fill="none" stroke="#222" strokeWidth="1.200" />
        <path d="M0 11l4-3v5z" fill="#222" />
      </Svg>
      <div className="ml-[4px]"><Caret color="#333" /></div>
      <div className="ml-[6px]">
        <Svg w={16} h={16}>
          <path d="M1 5h14v10H1z" fill="#f0f0f0" stroke="#445" />
          <rect x="4" y="8" width="8" height="4" fill="#bbb" stroke="#445" strokeWidth="0.700" />
          <path d="M2 5l1-3 5 1 6-3-1 4z" fill="#888" />
        </Svg>
      </div>
      <div className="ml-[10px]">
        <Svg w={16} h={17}>
          <path d="M4 9V3c0-1 2-1 2 0v4-6c0-1 2-1 2 0v6-5c0-1 2-1 2 0v5-3c0-1 2-1 2 0v7c0 4-2 6-5 6s-4-2-5-4L0 8c0-1 1-2 2-1z" fill="#fff" stroke="#333" strokeWidth="0.800" />
        </Svg>
      </div>
      <div className="ml-[10px]">
        <Svg w={17} h={16}>
          <circle cx="6" cy="9" r="5" fill="#e0f0f2" stroke="#555" strokeWidth="1.300" />
          <path d="M9.500 12.500L13 16" stroke="#444" strokeWidth="2" />
          <path d="M12 2h4M14 0v4M12 6h4" stroke="#333" />
        </Svg>
      </div>
      <div className="ml-[8px]">
        <Svg w={17} h={17}>
          <rect x="0.500" y="0.500" width="15" height="15" fill="none" stroke="#444" strokeDasharray="2 1" />
          <circle cx="7" cy="7" r="5" fill="#e0f0f2" stroke="#555" strokeWidth="1.300" />
          <path d="M10.500 10.500L15 15" stroke="#444" strokeWidth="2" />
        </Svg>
      </div>
      <div className="ml-[4px]"><Caret color="#333" /></div>
      <div className="ml-[5px]">
        <Svg w={16} h={16}>
          <rect x="0.500" y="0.500" width="15" height="11" fill="#9fbfe6" stroke="#445" />
          <path d="M5 12v2h6v-2M3 15h10" fill="none" stroke="#445" />
        </Svg>
      </div>
      <div className="ml-[3px]"><Caret color="#333" /></div>
      <div className="ml-[5px]">
        <Svg w={16} h={16}>
          <rect x="0" y="0" width="16" height="16" fill="#999" />
          <path d="M4 0v16M8 0v16M12 0v16M0 4h16M0 8h16M0 12h16" stroke="#ddd" />
        </Svg>
      </div>
      <div className="ml-[3px]"><Caret color="#333" /></div>
      <div className="ml-[5px]">
        <Svg w={15} h={13}>
          <rect x="0.500" y="0.500" width="14" height="12" fill="#a9c4e6" stroke="#2e4f80" />
          <path d="M7.500 0v13M0 6.500h15" stroke="#2e4f80" />
        </Svg>
      </div>
      <div className="ml-[3px]"><Caret color="#333" /></div>
    </div>
  );
}

const FEATURES = ["e", "i", "s", "e", "s", "e", "s", "e", "s", "e", "s", "s", "e"];

function SketchFeature() {
  return (
    <Svg w={16} h={16} className="opacity-50">
      <rect x="1" y="1" width="12" height="12" fill="none" stroke="#89b3d8" strokeDasharray="2 1" />
      <path d="M4 4h6M4 4v6" stroke="#89b3d8" />
      <path d="M9 14l5-5 2 1-5 5z" fill="#e8a050" />
    </Svg>
  );
}

function PlayerButton({ d }: { d: string }) {
  return (
    <Svg w={13} h={13}>
      <path d={d} fill="#555" />
    </Svg>
  );
}

function Timeline() {
  return (
    <div className="flex h-[50px] items-center justify-between border-t border-[#dedede] bg-[#f0f0f0] pr-[17px] pl-[11px]">
      <div className="flex items-center">
        <div className="flex items-center gap-[12px]">
          <PlayerButton d="M0 1h2v11H0zM3 6.500L12 1v11z" />
          <PlayerButton d="M0 6.500L9 1v11zM10 4h2v5h-2z" />
          <PlayerButton d="M1 0l11 6.500L1 13z" />
          <PlayerButton d="M3 1l9 5.500L3 12zM0 4h2v5H0z" />
          <PlayerButton d="M1 1l9 5.500L1 12zM10 1h2v11h-2z" />
        </div>
        <div className="relative ml-[19px] flex items-center">
          <div className="z-10 flex h-[24px] w-[24px] items-center justify-center rounded-[2px] bg-[#0696d7]">
            <Svg w={18} h={18}>
              <rect x="2" y="2" width="12" height="12" fill="none" stroke="#2a6f9c" strokeDasharray="2 1" />
              <path d="M5 5h6M5 5v6" stroke="#2a6f9c" />
              <path d="M10 16l5-5 2 1-5 5z" fill="#ef8a3a" />
              <path d="M15 11l2-1 1 2-1 0z" fill="#d32" />
            </Svg>
          </div>
          {FEATURES.map((feature, i) => (
            <div key={i} className="flex w-[24px] justify-center">
              {feature === "e" && (
                <div className="opacity-40"><ExtrudeIcon scale={0.45} /></div>
              )}
              {feature === "s" && <SketchFeature />}
              {feature === "i" && (
                <div className="opacity-40">
                  <Svg w={15} h={15}>
                    <rect width="15" height="15" fill="#9cc8ec" />
                    <circle cx="11" cy="4" r="1.500" fill="#fff" />
                    <path d="M0 15V9l4-2 4 3 3-1 4 2v4z" fill="#5a98c8" />
                  </Svg>
                </div>
              )}
            </div>
          ))}
          <div className="absolute top-[27px] left-[12px] flex h-[2px] w-[312px] justify-between bg-[#c8c8c8]">
            {Array.from({ length: 14 }).map((_, i) => (
              <div key={i} className="mt-[-4px] h-[4px] w-[2px] bg-[#c8c8c8]" />
            ))}
          </div>
          <div className="absolute top-[-3px] left-[18px] z-20 flex flex-col items-center">
            <div className="h-[7px] w-[12px] bg-[#555] [clip-path:polygon(0_0,100%_0,100%_40%,50%_100%,0_40%)]" />
            <div className="h-[24px] w-[2px] bg-[#555]" />
          </div>
        </div>
      </div>
      <Svg w={14} h={14}>
        <circle cx="7" cy="7" r="4" fill="none" stroke="#555" strokeWidth="3" />
        <circle cx="7" cy="7" r="6.300" fill="none" stroke="#555" strokeWidth="1.500" strokeDasharray="2.500 2.400" />
      </Svg>
    </div>
  );
}

export default function App() {
  return (
    <div className="flex h-[1040px] w-[2562px] flex-col overflow-hidden bg-white font-['Liberation_Sans',sans-serif]">
      <TitleBar />
      <TabStrip />
      <Ribbon />
      <div className="relative flex-1">
        <Canvas />
        <Navigator />
        <Comments />
        <ExtrudeDialog />
        <DistanceInput />
        <NavBar />
        <span className="absolute right-[22px] bottom-[10px] text-[11px] font-bold text-[#333]">1 Perfil | Área : 2500.00 mm^2</span>
      </div>
      <Timeline />
    </div>
  );
}
